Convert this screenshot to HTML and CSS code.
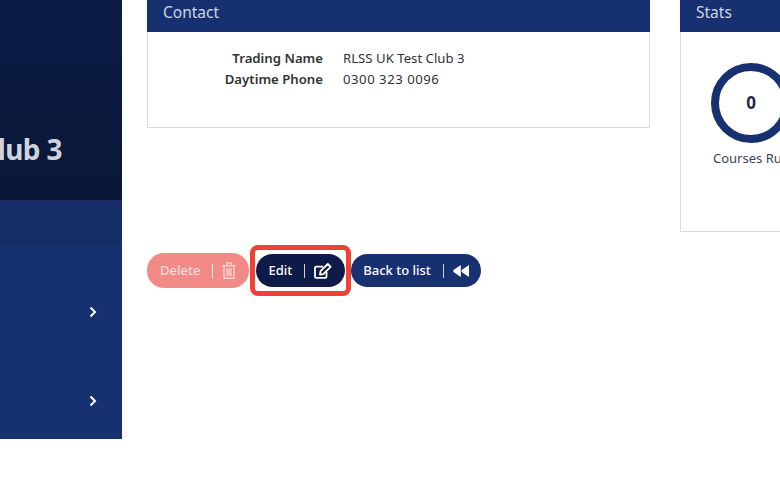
FILE: index.html
```html
<!DOCTYPE html>
<html lang="en">
<head>
    <meta charset="UTF-8">
    <title>RLSS UK Test Club 3</title>
    <link rel="stylesheet" href="styles.css">
</head>
<body>
    <div class="page">
        <div class="sidebar">
            <div class="club">
                <span class="club-name">RLSS UK Test Club 3</span>
            </div>
            <div class="nav-head"></div>
            <div class="nav">
                <div class="nav-item">
                    <svg class="chevron" width="8" height="12" viewBox="0 0 8 12"><path d="M1.500 1.500 6 6l-4.500 4.500" fill="none" stroke="#fff" stroke-width="2"/></svg>
                </div>
                <div class="nav-item">
                    <svg class="chevron" width="8" height="12" viewBox="0 0 8 12"><path d="M1.500 1.500 6 6l-4.500 4.500" fill="none" stroke="#fff" stroke-width="2"/></svg>
                </div>
            </div>
        </div>
        <div class="main">
            <div class="panels">
                <div class="panel contact">
                    <div class="panel-head">Contact</div>
                    <div class="panel-body">
                        <div class="row">
                            <span class="row-label">Trading Name</span>
                            <span class="row-value">RLSS UK Test Club 3</span>
                        </div>
                        <div class="row">
                            <span class="row-label">Daytime Phone</span>
                            <span class="row-value row-phone">0300 323 0096</span>
                        </div>
                    </div>
                </div>
                <div class="panel stats">
                    <div class="panel-head">Stats</div>
                    <div class="panel-body stats-body">
                        <div class="stat">
                            <div class="stat-ring">0</div>
                            <div class="stat-label">Courses Run</div>
                        </div>
                    </div>
                </div>
            </div>
            <div class="actions">
                <a class="btn btn-delete"><span class="btn-text">Delete</span><span class="sep"></span>
                    <svg width="14" height="17" viewBox="0 0 14 17" fill="none" stroke="#f9d3d0" stroke-width="1.400"><path d="M.5 3.700h13M4.800 3.700V1h4.400v2.700M2 3.700v12.600h10V3.700M5 6.200v7.800M7 6.200v7.800M9 6.200v7.800"/></svg>
                </a>
                <span class="highlight">
                    <a class="btn btn-edit"><span class="btn-text">Edit</span><span class="sep"></span>
                        <svg width="18" height="16" viewBox="0 0 18 16" fill="none" stroke="#fff" stroke-width="1.800"><path d="M12.500 9v4.700a1.200 1.200 0 0 1-1.200 1.200H2.200A1.200 1.200 0 0 1 1 13.700V4.800a1.200 1.200 0 0 1 1.200-1.200H9"/><path d="M6.500 8.200 13.800 1l2.800 2.800-7.300 7.300-3.300.5z" stroke-linejoin="round"/></svg>
                    </a>
                </span>
                <a class="btn btn-back"><span class="btn-text">Back to list</span><span class="sep"></span>
                    <svg width="16" height="12" viewBox="0 0 16 12" fill="#fff"><path d="M7.800 0v12L.8 7.300Q-.3 6 .8 4.700zM16 0v12L9 7.300Q7.900 6 9 4.700z"/></svg>
                </a>
            </div>
        </div>
    </div>
</body>
</html>
```

FILE: styles.css
```css
html, body {
    margin: 0;
    height: 503px;
    overflow: hidden;
    background: #fff;
}
body {
    font-family: "Noto Sans", sans-serif;
    font-size: 14px;
    color: #333;
}
.page {
    display: flex;
    align-items: flex-start;
    width: 780px;
    overflow: hidden;
}
.sidebar {
    width: 122px;
    flex-shrink: 0;
    height: 439px;
    background: #17306f;
}
.club {
    height: 200px;
    box-sizing: border-box;
    background: linear-gradient(#0b1b45, #0a1737);
    display: flex;
    justify-content: flex-end;
    padding: 130px 60px 0 0;
    overflow: hidden;
}
.club-name {
    flex-shrink: 0;
    font-size: 28px;
    line-height: 38px;
    font-weight: 700;
    letter-spacing: -0.6px;
    color: #cfd3dc;
    white-space: nowrap;
}
.nav-head {
    height: 45px;
    background: #152c66;
}
.nav-item {
    height: 89px;
    display: flex;
    justify-content: flex-end;
    align-items: center;
    padding-right: 25px;
}
.nav-item:first-child {
    margin-top: 22px;
}
.main {
    flex-shrink: 0;
    width: 640px;
    padding-left: 25px;
}
.panels {
    display: flex;
    align-items: flex-start;
    gap: 30px;
}
.panel {
    box-sizing: border-box;
    border: 1px solid #dcdcdc;
    border-top: 0;
    flex-shrink: 0;
}
.contact {
    width: 503px;
    height: 128px;
}
.stats {
    width: 150px;
    height: 232px;
}
.panel-head {
    height: 32px;
    margin: 0 -1px;
    padding-left: 16px;
    background: #17306f;
    color: #cdd5e8;
    font-size: 15.500px;
    line-height: 25px;
}
.panel-body {
    padding-top: 16px;
}
.row {
    display: flex;
    gap: 20px;
    line-height: 21px;
    font-size: 13.200px;
}
.row-label {
    width: 175px;
    text-align: right;
    font-weight: 600;
}
.row-phone {
    letter-spacing: 0.5px;
}
.stats-body {
    padding: 31px 0 0 30px;
}
.stat {
    width: 80px;
}
.stat-ring {
    box-sizing: border-box;
    width: 80px;
    height: 80px;
    border: 8px solid #17306f;
    border-radius: 50%;
    display: flex;
    align-items: center;
    justify-content: center;
    font-size: 17px;
    line-height: 20px;
    font-weight: 700;
    color: #1f2a4d;
}
.stat-label {
    margin-top: 6px;
    margin-left: 2px;
    font-size: 13px;
    line-height: 18px;
    white-space: nowrap;
    color: #3a4256;
}
.actions {
    display: flex;
    align-items: center;
    margin-top: 13px;
}
.btn {
    display: flex;
    align-items: center;
    height: 33px;
    padding: 0 12px;
    border-radius: 17px;
    color: #fff;
    font-size: 13px;
    font-weight: 500;
}
.btn-text {
    padding-bottom: 2px;
}
.sep {
    width: 1px;
    height: 14px;
    margin: 0 9px 0 12px;
    background: rgba(255, 255, 255, 0.8);
}
.btn-delete {
    background: #f28b87;
    color: #fbdcda;
    height: 35px;
    padding: 0 13px;
    margin-right: 1px;
}
.btn-edit {
    background: #0e1a48;
    padding-right: 13px;
}
.btn-back {
    background: #17306f;
}
.highlight {
    display: flex;
    border: 5px solid #ef4136;
    border-radius: 8px;
    padding: 4px 1px;
}
```
